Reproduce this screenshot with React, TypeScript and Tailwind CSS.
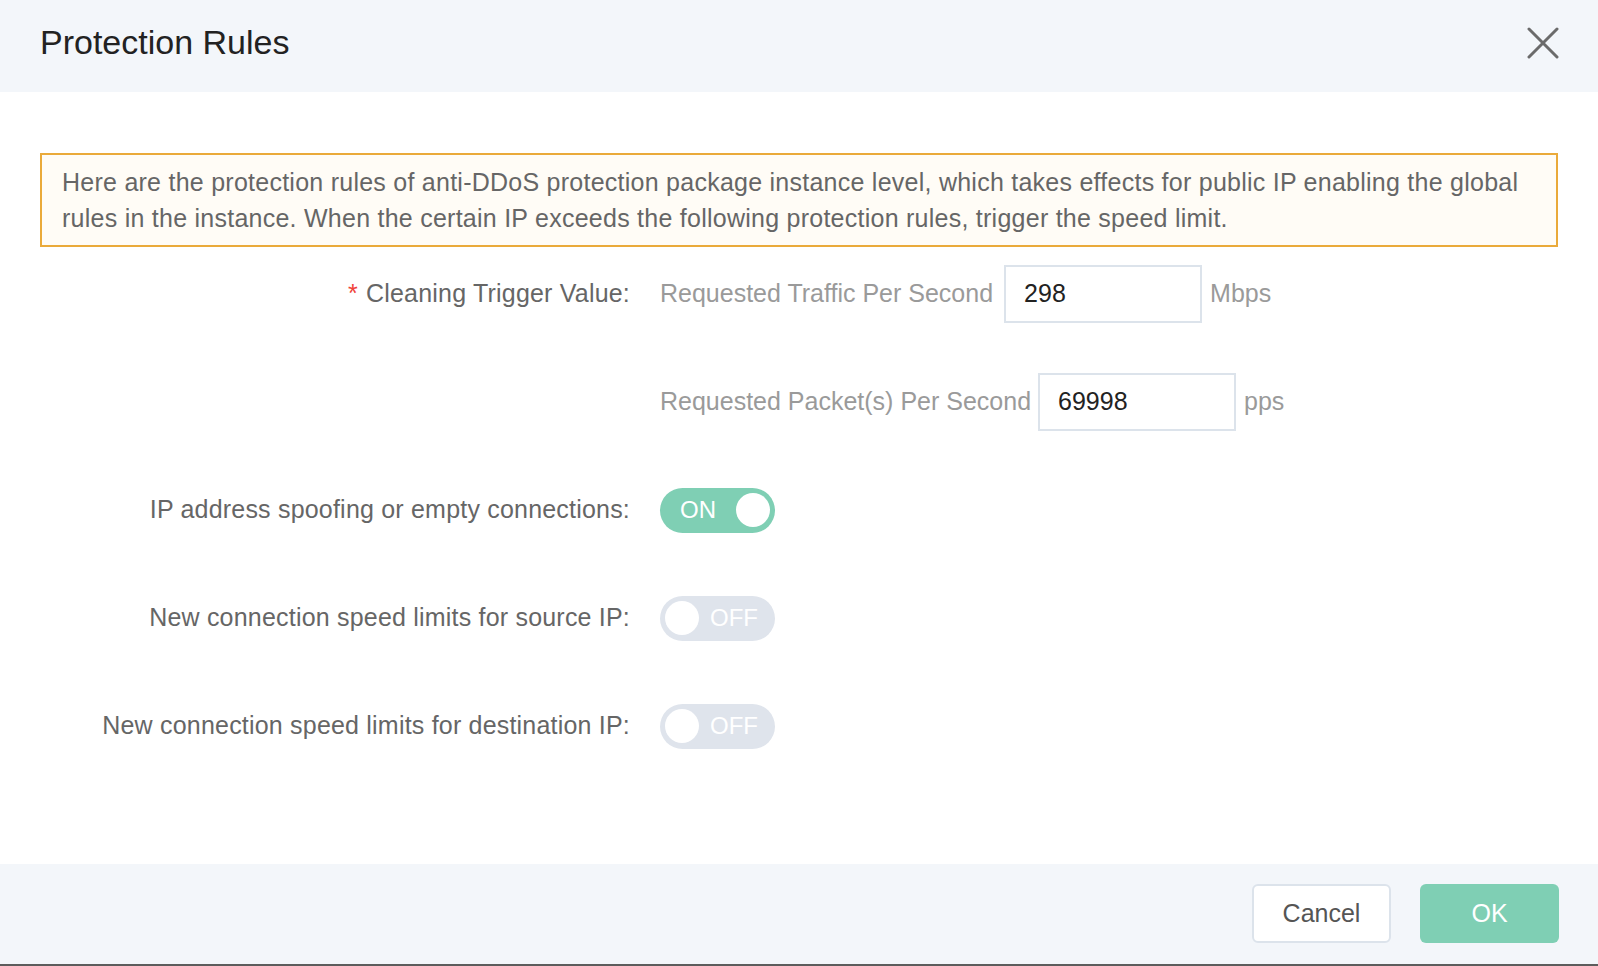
import React from "react";

function Toggle({ on }: { on: boolean }) {
  if (on) {
    return (
      <div className="flex h-[45px] w-[115px] items-center justify-between rounded-full bg-[#7fcfb4] pl-[20px] pr-[5px]">
        <span className="text-[24px] leading-none text-white">ON</span>
        <span className="h-[34px] w-[34px] rounded-full bg-white" />
      </div>
    );
  }
  return (
    <div className="flex h-[45px] w-[115px] items-center rounded-full bg-[#dfe4ec] pl-[5px]">
      <span className="h-[34px] w-[34px] rounded-full bg-white" />
      <span className="ml-[11px] text-[24px] leading-none text-white">OFF</span>
    </div>
  );
}

function Row({ label, required, children }: { label: string; required?: boolean; children: React.ReactNode }) {
  return (
    <div className="flex h-[58px] items-center">
      <div className="w-[630px] text-right text-[25px] tracking-[0.2px] text-[#666]">
        {required && <span className="mr-[8px] text-[#f0433a]">*</span>}
        {label}
      </div>
      <div className="flex items-center pl-[30px]">{children}</div>
    </div>
  );
}

function NumInput({ value }: { value: string }) {
  return (
    <div className="flex h-[58px] w-[198px] items-center border-2 border-[#dce3eb] bg-white pl-[18px] text-[25px] text-[#222]">
      {value}
    </div>
  );
}

export default function App() {
  return (
    <div
      className="flex h-[966px] w-[1598px] flex-col bg-white"
      style={{ fontFamily: '"Liberation Sans", Arial, sans-serif' }}
    >
      <header className="flex h-[92px] items-start justify-between bg-[#f3f6fa] pl-[40px] pr-[39px]">
        <h1 className="pt-[22px] text-[34px] leading-[40px] text-[#222]">Protection Rules</h1>
        <svg className="mt-[27px]" width="32" height="32" viewBox="0 0 32 32" fill="none">
          <path d="M2 2L30 30M30 2L2 30" stroke="#6b6b6b" strokeWidth="3" strokeLinecap="round" />
        </svg>
      </header>

      <main className="flex flex-1 flex-col">
        <div className="mx-[40px] mt-[61px] h-[94px] border-2 border-[#eaaa3a] bg-[#fffcf6] py-[9px] pl-[20px] text-[25px] leading-[36px] tracking-[0.25px] whitespace-nowrap text-[#666]">
          Here are the protection rules of anti-DDoS protection package instance level, which takes effects for public IP enabling the global
          <br />
          rules in the instance. When the certain IP exceeds the following protection rules, trigger the speed limit.
        </div>

        <div className="mt-[18px] flex flex-col gap-[50px]">
          <Row label="Cleaning Trigger Value:" required>
            <span className="text-[25px] text-[#9a9a9a]">Requested Traffic Per Second</span>
            <div className="ml-[11px]">
              <NumInput value="298" />
            </div>
            <span className="ml-[8px] text-[25px] text-[#9a9a9a]">Mbps</span>
          </Row>
          <Row label="">
            <span className="text-[25px] text-[#9a9a9a]">Requested Packet(s) Per Second</span>
            <div className="ml-[7px]">
              <NumInput value="69998" />
            </div>
            <span className="ml-[8px] text-[25px] text-[#9a9a9a]">pps</span>
          </Row>
          <Row label="IP address spoofing or empty connections:">
            <Toggle on />
          </Row>
          <Row label="New connection speed limits for source IP:">
            <Toggle on={false} />
          </Row>
          <Row label="New connection speed limits for destination IP:">
            <Toggle on={false} />
          </Row>
        </div>
      </main>

      <footer className="flex h-[100px] items-start justify-end gap-[29px] bg-[#f3f6fa] pt-[20px] pr-[39px]">
        <button className="flex h-[59px] w-[139px] items-center justify-center rounded-[6px] border-2 border-[#dce3eb] bg-white text-[25px] text-[#555]">
          Cancel
        </button>
        <button className="flex h-[59px] w-[139px] items-center justify-center rounded-[6px] bg-[#7fcfb4] text-[25px] text-white">
          OK
        </button>
      </footer>
      <div className="h-[2px] bg-[#5c5c5c]" />
    </div>
  );
}
